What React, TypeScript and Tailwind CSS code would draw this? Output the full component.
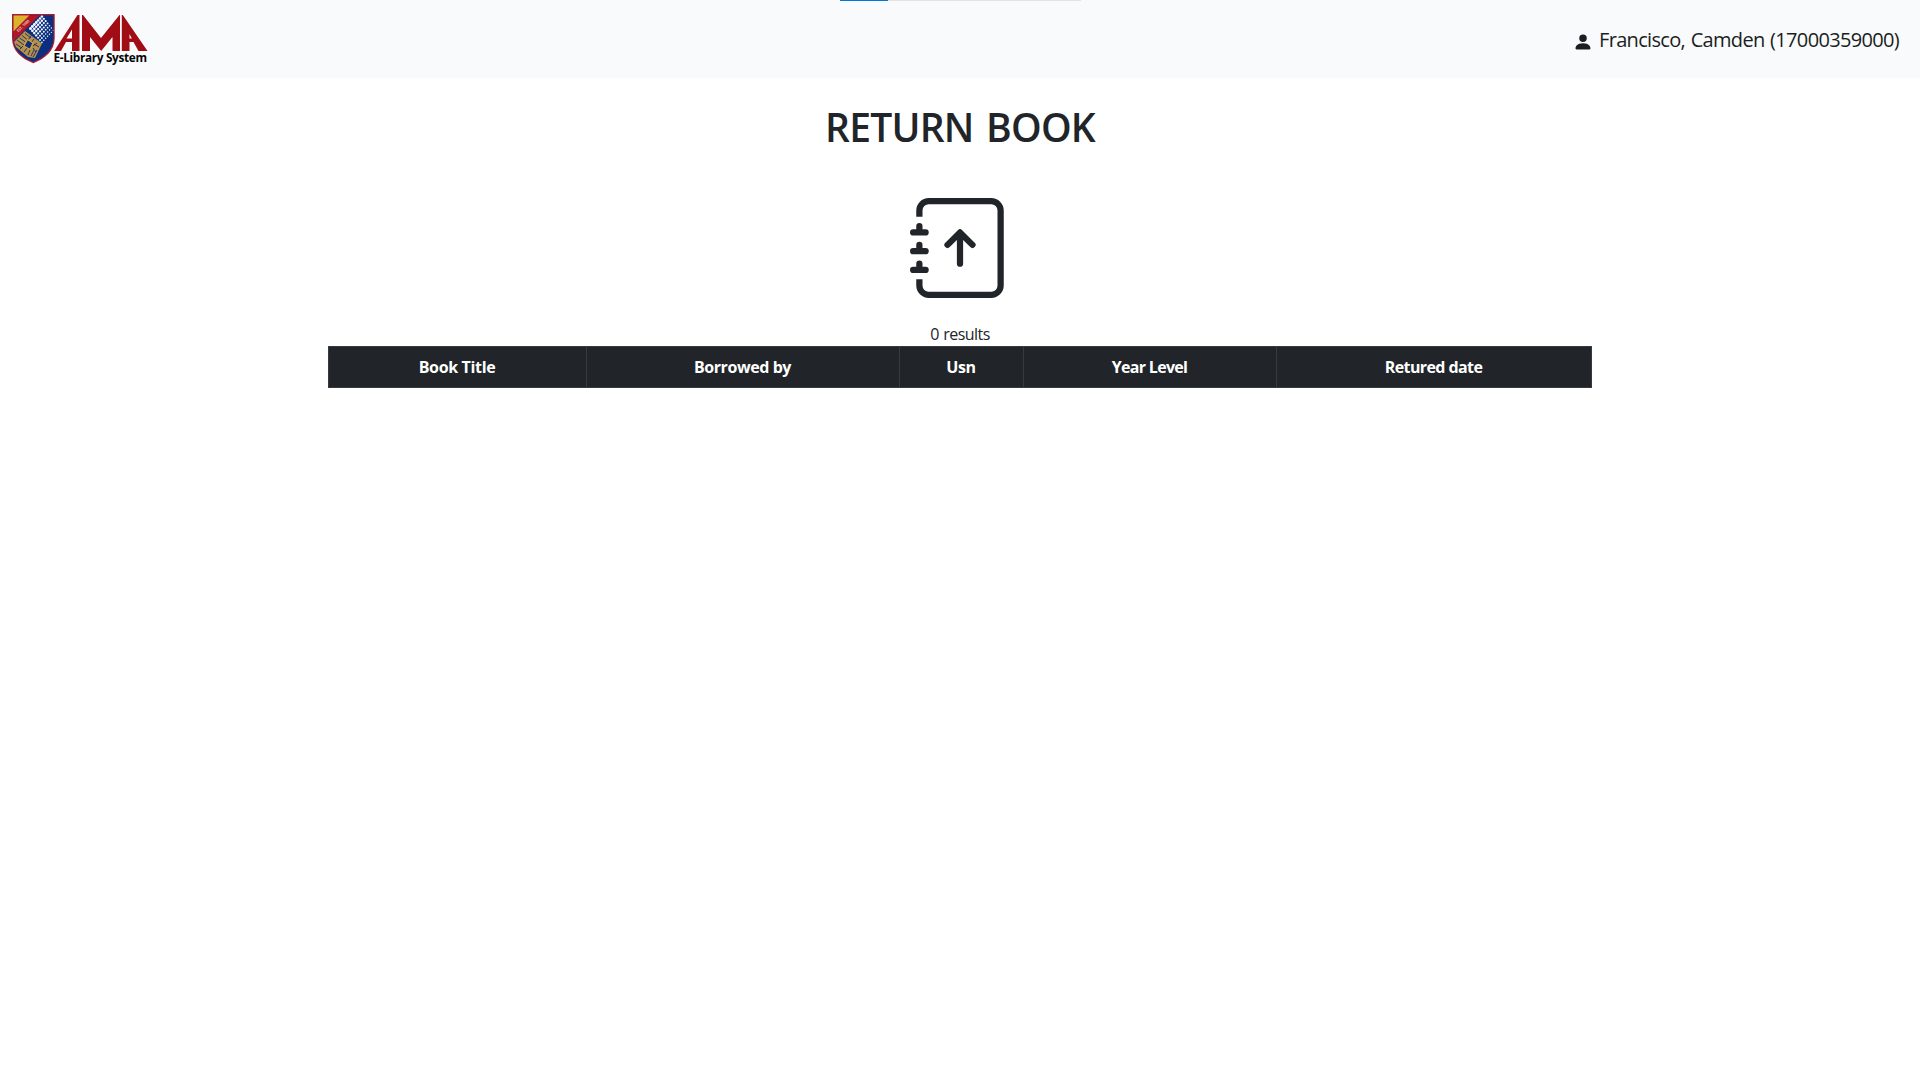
import { BsJournalArrowUp, BsPersonFill } from "react-icons/bs";

const columns = [
  { label: "Book Title", width: "w-[258px]", tracking: "tracking-[-0.34px]" },
  { label: "Borrowed by", width: "w-[313px]", tracking: "tracking-[-0.42px]" },
  { label: "Usn", width: "w-[124px]", tracking: "tracking-[-0.42px]" },
  { label: "Year Level", width: "w-[253px]", tracking: "tracking-[-0.7px]" },
  { label: "Retured date", width: "w-[315px]", tracking: "tracking-[-0.6px]" },
];

// Halftone dots that shrink as they move down and to the right.
const dots = Array.from({ length: 7 }, (_, row) =>
  Array.from({ length: 7 }, (_, col) => ({
    x: 30.5 + col * 1.9 + row * 1.9,
    y: 28.5 - col * 2 + row * 2.3,
    r: 1.5 - col * 0.04 - row * 0.11,
  })),
).flat();

function Logo() {
  return (
    <svg width="150" height="78" viewBox="0 0 150 78" role="img" aria-label="AMA E-Library System">
      <defs>
        <clipPath id="shield">
          <path d="M13.300 15.300H53.400V38C53.400 50 44 57.500 33.300 61.800C22 57.500 13.300 50 13.300 38Z" />
        </clipPath>
      </defs>
      <path d="M12 14H54.700V38C54.700 51 45 58.500 33.300 63.300C21.500 58.500 12 51 12 38Z" fill="#ad1a2b" />
      <g clipPath="url(#shield)">
        <rect x="12" y="14" width="43" height="50" fill="#0b2f7e" />
        <path d="M12 14H41L12 43Z" fill="#b01625" />
        <path d="M13.300 15.300H29.500L13.300 31.500Z" fill="#dbb42b" />
        <g fill="#f2f6fc">
          {dots.map((d, i) => (
            <circle key={i} cx={d.x} cy={d.y} r={d.r} />
          ))}
        </g>
        <path d="M25 31L42 43.500L35 58L28 57L16 47L14 42Z" fill="#b98f45" />
        <g fill="none" stroke="#0b2f7e" strokeWidth="0.900">
          <path d="M17 40l7 5M19.500 38l6 4M22 35.500l5 4M16 44l6 4M20 49l3-3M25 33.500l6 4.500M28 55l2-5M24 52l3-4M31 56l3-6M33 57l4-7M36 52l-3-4M39 47l-5-3M37 43l-4 3M34 39l-3 4M31 36l-3 4" />
        </g>
        <path d="M27.500 39.500L33 43L30 49.500L24 46Z" fill="#0b2f7e" stroke="#d3a03c" strokeWidth="1.300" strokeLinejoin="round" />
        <text x="18.200" y="32.300" transform="rotate(-43 18.200 32.300)" textLength="16" fontFamily="Open Sans, sans-serif" fontWeight="700" fontSize="4" fill="#e3b0b0">EST. 1980</text>
      </g>
      <g fill="#a10d14">
        <path d="M54.200 51L77.500 15H79.500V51H72V42H66L61 51ZM66.500 38.500H72V29.500Z" fillRule="evenodd" />
        <path d="M82 51V15H83L101 38L119.500 15H120V51H112.500V37L101.200 51L90 37V51Z" />
        <path d="M121.800 51V15H122.800L147.500 51H138.500L133.500 42H129.500V51ZM129.500 38.500H131.800L129.500 34Z" fillRule="evenodd" />
      </g>
      <text x="53.500" y="61.600" textLength="93.500" fontFamily="Open Sans, sans-serif" fontWeight="700" fontSize="11.800" fill="#050505">E-Library System</text>
    </svg>
  );
}

export default function App() {
  return (
    <div className="min-h-screen bg-white font-['Open_Sans',sans-serif] text-[#212529]">
      <div className="absolute left-[840px] top-0 h-px w-[241px] bg-[#e3e4e6]">
        <div className="h-px w-12 bg-[#0078d7]" />
      </div>
      <header className="flex h-[78px] items-center justify-between bg-[#f8fafc] pr-[21px]">
        <Logo />
        <div className="flex items-center gap-[6px] text-[#1b1e21]">
          <BsPersonFill className="mt-[5px] size-5" />
          <span className="mt-[2px] text-[20px] leading-[30px] tracking-[-0.67px] [word-spacing:1px]">Francisco, Camden (17000359000)</span>
        </div>
      </header>
      <main className="flex flex-col items-center">
        <h1 className="mt-[25px] text-[39px] font-semibold leading-[48px] tracking-[-0.75px] [word-spacing:3px]">RETURN BOOK</h1>
        <BsJournalArrowUp className="mt-[47px] size-[100px]" />
        <p className="mt-6 text-[16px] leading-6 tracking-[-0.55px] [word-spacing:1px]">0 results</p>
        <table className="mr-px w-[1263px] table-fixed border-collapse bg-[#212529] text-[16px] leading-6 text-white">
          <thead>
            <tr>
              {columns.map((c) => (
                <th key={c.label} className={`border border-[#373b3e] py-2 text-center font-bold ${c.width} ${c.tracking}`}>
                  {c.label}
                </th>
              ))}
            </tr>
          </thead>
        </table>
      </main>
    </div>
  );
}
